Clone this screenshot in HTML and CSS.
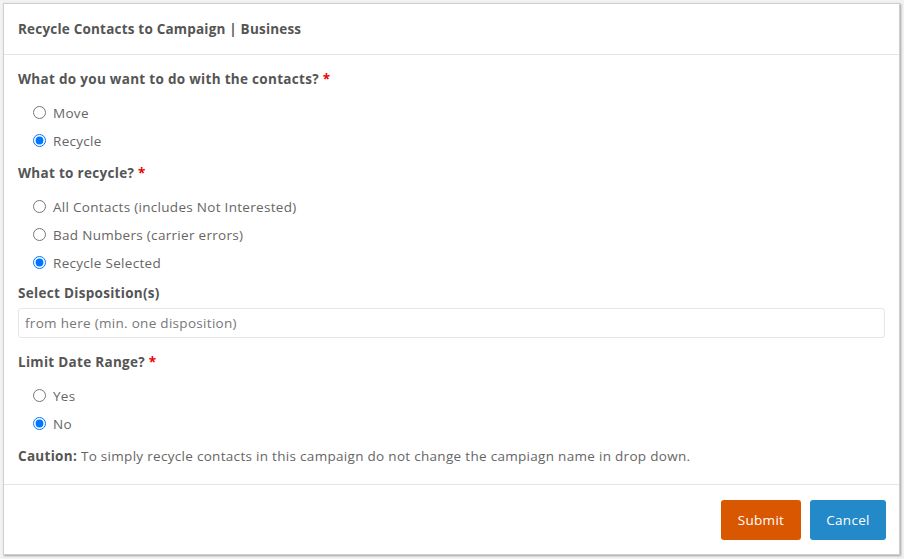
FILE: index.html
```html
<!DOCTYPE html>
<html lang="en">
<head>
    <meta charset="UTF-8">
    <meta name="viewport" content="width=device-width, initial-scale=1.0">
    <title>Recycle Contacts to Campaign</title>
    <link rel="stylesheet" href="styles.css">
</head>
<body>
    <div class="modal">
        <div class="modal-header">
            <h2>Recycle Contacts to Campaign | Business</h2>
        </div>

        <div class="modal-body">
            <div class="field-label required wide">What do you want to do with the contacts?</div>
            <div class="options first">
                <label class="option"><input type="radio" name="action"> Move</label>
                <label class="option"><input type="radio" name="action" checked> Recycle</label>
            </div>

            <div class="field-label required">What to recycle?</div>
            <div class="options">
                <label class="option"><input type="radio" name="what"> All Contacts (includes Not Interested)</label>
                <label class="option"><input type="radio" name="what"> Bad Numbers (carrier errors)</label>
                <label class="option"><input type="radio" name="what" checked> Recycle Selected</label>
            </div>

            <div class="field-label tight">Select Disposition(s)</div>
            <input type="text" class="text-input" placeholder="from here (min. one disposition)">

            <div class="field-label required spaced">Limit Date Range?</div>
            <div class="options">
                <label class="option"><input type="radio" name="range"> Yes</label>
                <label class="option"><input type="radio" name="range" checked> No</label>
            </div>

            <p class="caution"><strong>Caution:</strong> To simply recycle contacts in this campaign do not change the campiagn name in drop down.</p>
        </div>

        <div class="modal-footer">
            <button class="btn btn-submit">Submit</button>
            <button class="btn btn-cancel">Cancel</button>
        </div>
    </div>
</body>
</html>
```

FILE: styles.css
```css
body {
    font-family: "Open Sans", "Noto Sans", Arial, sans-serif;
    font-size: 13.5px;
    letter-spacing: 0.3px;
    color: #666;
    background-color: #f2f2f2;
    margin: 0;
    padding: 3px 4px 4px 3px;
}

.modal {
    background-color: white;
    border: 1px solid #cfcfcf;
    box-shadow: 1px 1px 2px rgba(0, 0, 0, 0.35);
    height: 552px;
    box-sizing: border-box;
    display: flex;
    flex-direction: column;
}

.modal-header {
    height: 50px;
    padding: 0 14px;
    border-bottom: 1px solid #e5e5e5;
    display: flex;
    align-items: center;
}

.modal-header h2 {
    margin: 0;
    font-size: 13.5px;
    font-weight: 700;
    letter-spacing: 0.2px;
    color: #555;
}

.modal-body {
    flex: 1;
    padding: 14px 14px 0;
}

.field-label {
    font-weight: 700;
    color: #555;
    line-height: 20px;
}

.required::after {
    content: " *";
    color: #e00;
}

.wide::after {
    content: "\00a0 *";
}

.field-label.tight {
    margin-top: -2px;
}

.field-label.spaced {
    margin-top: 14px;
}

.options {
    padding: 10px 0 8px 15px;
}

.options + .caution {
    margin-top: 0;
}

.option {
    display: flex;
    align-items: center;
    height: 28px;
    gap: 7px;
}

.option input {
    margin: 0 0 2px;
    width: 13px;
    height: 13px;
}

.text-input {
    display: block;
    width: 100%;
    height: 30px;
    margin-top: 5px;
    padding: 0 6px;
    border: 1px solid #e6e6e6;
    border-radius: 3px;
    font-family: inherit;
    font-size: 13.5px;
    letter-spacing: 0.3px;
    color: #666;
    box-sizing: border-box;
}

.text-input::placeholder {
    color: #777;
}

.caution {
    margin: 0;
    line-height: 20px;
}

.caution strong {
    color: #555;
}

.modal-footer {
    border-top: 1px solid #e5e5e5;
    padding: 15px 13px 0;
    height: 70px;
    box-sizing: border-box;
    display: flex;
    justify-content: flex-end;
    gap: 9px;
}

.btn {
    height: 40px;
    border: none;
    border-radius: 3px;
    color: white;
    font-family: inherit;
    font-size: 13.5px;
    letter-spacing: 0.3px;
    padding: 0 16px;
    cursor: pointer;
}

.btn-submit {
    width: 80px;
    background-color: #d95700;
}

.btn-cancel {
    width: 76px;
    background-color: #2389c8;
}
```
